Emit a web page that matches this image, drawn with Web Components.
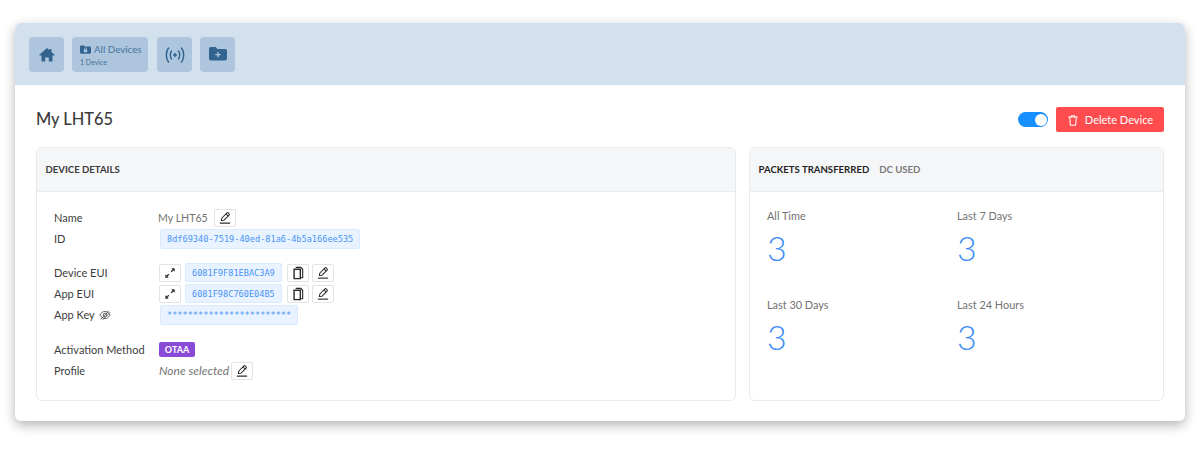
<!DOCTYPE html>
<html>
<head>
<meta charset="utf-8">
<title>My LHT65</title>
<style>
  html, body { margin: 0; background: #fff; }
  body { padding: 23px 15px 0; font-family: Lato, "Open Sans", sans-serif; overflow: hidden; height: 427px; }
</style>
</head>
<body>
<device-page>
  <device-nav slot="nav"></device-nav>
  <device-toolbar slot="toolbar" title="My LHT65"></device-toolbar>
  <details-panel slot="left"></details-panel>
  <stats-panel slot="right"></stats-panel>
</device-page>

<script>
const ICONS = {
  home: '<path d="M8 1 .4 7.800c-.3.3-.1.7.3.7H2.500V14c0 .3.2.5.5.5h3.200v-4h3.600v4H13c.3 0 .5-.2.5-.5V8.500h1.800c.4 0 .6-.4.3-.7L12.500 5V2h-2v1.200z" fill="currentColor"/>',
  folderLock: '<path d="M1.500 2h4.300l1.500 1.700h7.200c.8 0 1.500.7 1.500 1.500v7.300c0 .8-.7 1.500-1.500 1.500h-13C.7 14 0 13.300 0 12.500v-9C0 2.700.7 2 1.500 2z" fill="currentColor"/><path d="M5.500 8h5v4h-5z" fill="#adc6de"/><path d="M6.500 8V7a1.500 1.500 0 0 1 3 0v1" fill="none" stroke="#adc6de"/>',
  folderPlus: '<path d="M2 1h5.500l2 2.300H18c1.100 0 2 .9 2 2V14c0 1.100-.9 2-2 2H2c-1.100 0-2-.9-2-2V3c0-1.100.9-2 2-2z" fill="currentColor"/><path d="M10 7v5M7.500 9.500h5" stroke="#adc6de" stroke-width="1.500" stroke-linecap="round"/>',
  signal: '<g fill="none" stroke="currentColor" stroke-width="1.500" stroke-linecap="round"><path d="M3.500 3C.6 6.500.6 13.500 3.500 17"/><path d="M16.500 3c2.900 3.500 2.900 10.500 0 14"/><path d="M6.500 6c-1.500 2.200-1.500 5.800 0 8"/><path d="M13.500 6c1.500 2.200 1.500 5.800 0 8"/><path d="M10 8.500v3M8.500 10h3"/></g>',
  pencil: '<g fill="none" stroke="currentColor" stroke-width="1.100" stroke-linejoin="round"><path d="M3.500 10.200 4.200 7.500 9.600 2.100a1 1 0 0 1 1.400 0l.9.9a1 1 0 0 1 0 1.400L6.500 9.800z"/><path d="M8.600 3.100 10.900 5.400"/></g><path d="M2 13h11" stroke="currentColor" stroke-width="1.200"/>',
  expand: '<path d="M12.500 2.500v3.600l-1.300-1.300-1.900 1.900-1-1 1.900-1.900-1.300-1.300zM2.500 12.500V8.900l1.300 1.300 1.900-1.900 1 1-1.900 1.900 1.300 1.300z" fill="currentColor"/>',
  copy: '<path d="M5 1.500h5.500l2 2v9h-1.500" fill="none" stroke="currentColor" stroke-width="1.200"/><path d="M3.300 3.500h6.700v10H3.300z" fill="none" stroke="currentColor" stroke-width="1.500"/>',
  eyeOff: '<g fill="none" stroke="currentColor" stroke-width="1"><path d="M1 7.500C3 4.300 5.200 3 7.500 3s4.500 1.300 6.500 4.500C12 10.700 9.800 12 7.500 12S3 10.700 1 7.500z"/><circle cx="7.500" cy="7.500" r="2.300"/><path d="M2 13 12.500 2M4.500 13.500 14 4"/></g>',
  trash: '<g fill="none" stroke="currentColor" stroke-width="1.200" stroke-linecap="round" stroke-linejoin="round"><path d="M2 3.500h10"/><path d="M5 3.500V2h4v1.500"/><path d="M3.200 3.500l.6 9c0 .3.3.5.5.5h5.400c.2 0 .5-.2.5-.5l.6-9"/></g>'
};

function icon(name, size, box) {
  return `<svg width="${size}" height="${size}" viewBox="0 0 ${box} ${box}" aria-hidden="true">${ICONS[name]}</svg>`;
}

class DevicePage extends HTMLElement {
  constructor() {
    super();
    this.attachShadow({mode: 'open'}).innerHTML = `
      <style>
        :host {
          display: block;
          height: 398px;
          background: #fff;
          border-radius: 6px;
          box-shadow: 0 4px 12px rgba(0,0,0,.3);
          overflow: hidden;
          color: #3d3d3d;
        }
        .content { padding: 22px 21px 0; }
        .panels { display: flex; gap: 13px; margin-top: 15px; }
      </style>
      <slot name="nav"></slot>
      <div class="content">
        <slot name="toolbar"></slot>
        <div class="panels">
          <slot name="left"></slot>
          <slot name="right"></slot>
        </div>
      </div>
    `;
  }
}

class DeviceNav extends HTMLElement {
  constructor() {
    super();
    this.attachShadow({mode: 'open'}).innerHTML = `
      <style>
        :host {
          display: flex;
          height: 62px;
          box-sizing: border-box;
          padding: 14px;
          gap: 8px;
          background: #d3e0ed;
          color: #33648f;
        }
        .tile {
          width: 35px;
          height: 35px;
          background: #adc6de;
          border-radius: 4px;
          display: flex;
          align-items: center;
          justify-content: center;
        }
        .wide {
          width: 76px;
          display: block;
          box-sizing: border-box;
          padding: 6px 0 0 8px;
          margin-right: 1px;
        }
        .wide .top { display: flex; align-items: center; gap: 3px; font-size: 9.800px; line-height: 12px; color: #47739b; }
        .wide .sub { font-size: 7px; line-height: 9px; margin-top: 3px; color: #47739b; }
      </style>
      <div class="tile">${icon('home', 16, 16)}</div>
      <div class="tile wide">
        <div class="top"><span style="color:#33648f;display:flex">${icon('folderLock', 11, 16)}</span>All Devices</div>
        <div class="sub">1 Device</div>
      </div>
      <div class="tile">${icon('signal', 20, 20)}</div>
      <div class="tile">${icon('folderPlus', 18, 20)}</div>
    `;
  }
}

class DeviceToolbar extends HTMLElement {
  constructor() {
    super();
    this.attachShadow({mode: 'open'}).innerHTML = `
      <style>
        :host { display: flex; align-items: center; height: 25px; }
        h1 { margin: 0 0 3px; font-size: 16.400px; font-weight: 500; color: #3b3b3b; flex: 1; }
        .switch {
          width: 30px; height: 15px; border-radius: 8px; background: #1890ff;
          display: flex; justify-content: flex-end; align-items: center; padding-right: 1.500px;
          box-sizing: border-box; margin-right: 8px;
        }
        .knob { width: 12px; height: 12px; border-radius: 50%; background: #fff; }
        .del {
          width: 108px; height: 25px; border-radius: 2px; background: #ff4d4f; color: #fff;
          font-size: 11px; display: flex; align-items: center; justify-content: center; gap: 6px;
        }
      </style>
      <h1></h1>
      <div class="switch"><div class="knob"></div></div>
      <div class="del">${icon('trash', 12, 14)}<span>Delete Device</span></div>
    `;
  }
  connectedCallback() {
    this.shadowRoot.querySelector('h1').textContent = this.getAttribute('title');
  }
}

class PanelCard extends HTMLElement {
  constructor() {
    super();
    this.attachShadow({mode: 'open'}).innerHTML = `
      <style>
        :host {
          display: block;
          box-sizing: border-box;
          height: 254px;
          border: 1px solid #e8eaee;
          border-radius: 6px;
          overflow: hidden;
        }
        .head {
          height: 44px;
          box-sizing: border-box;
          background: #f5f6f8;
          border-bottom: 1px solid #e8eaee;
          display: flex;
          align-items: center;
          gap: 10px;
          padding-left: 8.500px;
        }
      </style>
      <div class="head"><slot name="head"></slot></div>
      <slot></slot>
    `;
  }
}

class IconBtn extends HTMLElement {
  constructor() {
    super();
    this.attachShadow({mode: 'open'}).innerHTML = `
      <style>
        :host {
          display: inline-flex;
          align-items: center;
          justify-content: center;
          box-sizing: border-box;
          width: 22px;
          height: 18px;
          background: #fff;
          border: 1px solid #e3e3e3;
          border-radius: 2px;
          color: #2b2b2b;
        }
      </style>
      ${icon(this.getAttribute('icon'), 14, 15)}
    `;
  }
}

class CodeChip extends HTMLElement {
  constructor() {
    super();
    this.attachShadow({mode: 'open'}).innerHTML = `
      <style>
        :host {
          display: inline-flex;
          align-items: center;
          box-sizing: border-box;
          height: 20px;
          padding: 0 6px;
          background: #e8f3ff;
          border: 1px solid #d9eaff;
          border-radius: 2px;
          font-family: "DejaVu Sans Mono", "Liberation Mono", monospace;
          font-size: 8.600px;
          color: #4a94f5;
          white-space: nowrap;
        }
      </style>
      <slot></slot>
    `;
  }
}

class DetailRow extends HTMLElement {
  constructor() {
    super();
    this.attachShadow({mode: 'open'}).innerHTML = `
      <style>
        :host { display: flex; align-items: center; height: 21px; font-size: 11px; }
        .label { width: 104px; color: #3d3d3d; flex: none; }
        .value { display: flex; align-items: center; color: #737373; }
      </style>
      <div class="label"><slot name="label"></slot></div>
      <div class="value"><slot></slot></div>
    `;
  }
}

class DetailsPanel extends HTMLElement {
  constructor() {
    super();
    const btn = (n, cls = '') => `<icon-btn class="${cls}" icon="${n}"></icon-btn>`;
    this.attachShadow({mode: 'open'}).innerHTML = `
      <style>
        :host { display: block; width: 700px; flex: none; }
        .head { font-size: 9.600px; font-weight: 700; color: #3b3b3b; }
        .body { padding: 15px 17px 0; }
        .group { margin-bottom: 13px; }
        .group + .group { margin-bottom: 14px; }
        .name { margin-right: 6px; font-size: 10.600px; }
        .chip-in { margin-left: 2px; }
        .ml1 { margin-left: 1px; }
        .ml3 { margin-left: 3px; }
        .ml4 { margin-left: 4px; }
        .ml5 { margin-left: 5px; }
        .short { height: 19px; }
        .key { display: flex; align-items: center; gap: 4px; }
        .eye { color: #444; display: flex; }
        .otaa {
          background: #8a4ad8; color: #fff; font-size: 9px; font-weight: 700; margin-left: 1px;
          height: 15px; width: 36px; display: flex; align-items: center; justify-content: center; border-radius: 2px;
        }
        em { margin-right: 2px; margin-left: 1px; font-size: 12px; }
      </style>
      <panel-card>
        <span class="head" slot="head">DEVICE DETAILS</span>
        <div class="body">
          <div class="group">
            <detail-row><span slot="label">Name</span><span class="name">My LHT65</span>${btn('pencil')}</detail-row>
            <detail-row><span slot="label">ID</span><code-chip class="chip-in">8df69340-7519-40ed-81a6-4b5a166ee535</code-chip></detail-row>
          </div>
          <div class="group">
            <detail-row><span slot="label">Device EUI</span>${btn('expand', 'ml1')}<code-chip class="ml4 short">6081F9F81EBAC3A9</code-chip>${btn('copy', 'ml5')}${btn('pencil', 'ml3')}</detail-row>
            <detail-row><span slot="label">App EUI</span>${btn('expand', 'ml1')}<code-chip class="ml4 short">6081F98C760E04B5</code-chip>${btn('copy', 'ml5')}${btn('pencil', 'ml3')}</detail-row>
            <detail-row><span slot="label" class="key">App Key <span class="eye">${icon('eyeOff', 12, 15)}</span></span><code-chip class="chip-in">************************</code-chip></detail-row>
          </div>
          <div class="group">
            <detail-row><span slot="label">Activation Method</span><span class="otaa">OTAA</span></detail-row>
            <detail-row><span slot="label">Profile</span><em>None selected</em>${btn('pencil')}</detail-row>
          </div>
        </div>
      </panel-card>
    `;
  }
}

class StatItem extends HTMLElement {
  constructor() {
    super();
    this.attachShadow({mode: 'open'}).innerHTML = `
      <style>
        :host { display: block; height: 89px; }
        .label { font-size: 10.900px; line-height: 14px; color: #737373; }
        .num { font-size: 34px; font-weight: 300; line-height: 42px; color: #3b8cf5; margin-top: 4px; }
      </style>
      <div class="label"></div>
      <div class="num"></div>
    `;
  }
  connectedCallback() {
    this.shadowRoot.querySelector('.label').textContent = this.getAttribute('label');
    this.shadowRoot.querySelector('.num').textContent = this.getAttribute('value');
  }
}

class StatsPanel extends HTMLElement {
  constructor() {
    super();
    this.attachShadow({mode: 'open'}).innerHTML = `
      <style>
        :host { display: block; width: 415px; flex: none; }
        .tab { font-size: 9.600px; font-weight: 700; color: #1f1f1f; }
        .tab.off { color: #7a7a7a; }
        .grid { display: grid; grid-template-columns: 190px 190px; padding: 17px 17px 0; }
      </style>
      <panel-card>
        <span class="tab" slot="head">PACKETS TRANSFERRED</span>
        <span class="tab off" slot="head">DC USED</span>
        <div class="grid">
          <stat-item label="All Time" value="3"></stat-item>
          <stat-item label="Last 7 Days" value="3"></stat-item>
          <stat-item label="Last 30 Days" value="3"></stat-item>
          <stat-item label="Last 24 Hours" value="3"></stat-item>
        </div>
      </panel-card>
    `;
  }
}

customElements.define('icon-btn', IconBtn);
customElements.define('code-chip', CodeChip);
customElements.define('detail-row', DetailRow);
customElements.define('panel-card', PanelCard);
customElements.define('stat-item', StatItem);
customElements.define('details-panel', DetailsPanel);
customElements.define('stats-panel', StatsPanel);
customElements.define('device-nav', DeviceNav);
customElements.define('device-toolbar', DeviceToolbar);
customElements.define('device-page', DevicePage);
</script>
</body>
</html>
